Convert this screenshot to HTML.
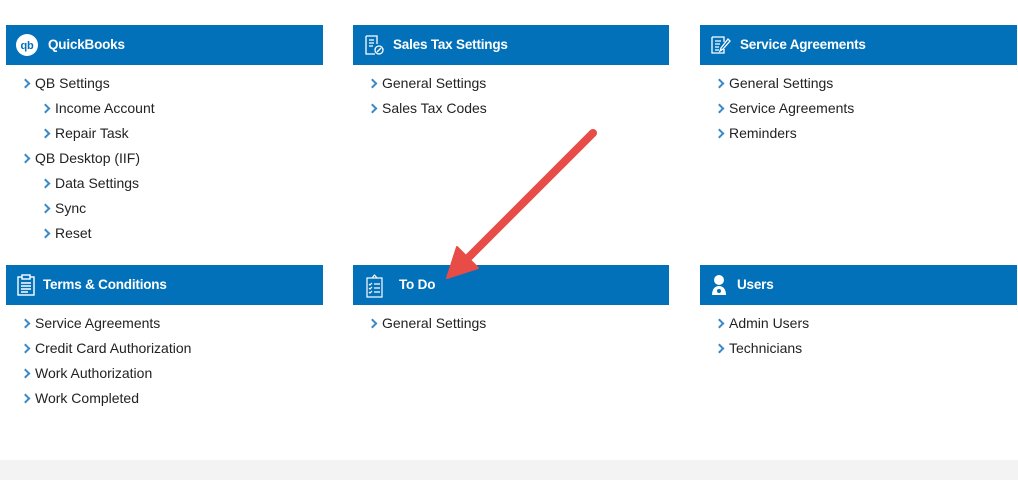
<!DOCTYPE html>
<html><head><style>
body{margin:0;width:1018px;height:480px;background:#fff;font-family:"Liberation Sans",sans-serif;position:relative;overflow:hidden}
.h{position:absolute;height:40px;background:#0271b9;color:#fff;font-weight:bold;font-size:13.5px;letter-spacing:-0.2px;line-height:40px;box-sizing:border-box}
.h svg{position:absolute;top:9px}
.h span{position:absolute;top:0}
.i{position:absolute;font-size:14px;color:#222;line-height:18px}
.i:before{content:"";position:absolute;left:-13px;top:6px;width:5px;height:5px;border-right:2px solid #3a8ac8;border-top:2px solid #3a8ac8;transform:rotate(45deg)}
.foot{position:absolute;left:0;top:460px;width:1018px;height:20px;background:#f3f3f3}
</style></head><body>
<div class="h" style="left:6px;top:25px;width:317px">
<svg style="left:10px" width="22" height="22" viewBox="0 0 22 22"><circle cx="11" cy="11" r="11" fill="#fff"/><text x="11" y="15" text-anchor="middle" font-size="11" font-weight="bold" fill="#0271b9" font-family="Liberation Sans">qb</text></svg>
<span style="left:42px">QuickBooks</span></div>
<div class="h" style="left:353px;top:25px;width:316px">
<svg style="left:10px" width="22" height="22" viewBox="0 0 22 22" fill="none" stroke="#fff" stroke-width="1.3"><path d="M3 2h11v8M3 2v18h9"/><path d="M6 6h5M6 9h5M6 12h4"/><circle cx="16" cy="16" r="4"/><path d="M14 18l4-4"/></svg>
<span style="left:40px">Sales Tax Settings</span></div>
<div class="h" style="left:700px;top:25px;width:317px">
<svg style="left:9px" width="22" height="22" viewBox="0 0 22 22" fill="none" stroke="#fff" stroke-width="1.3"><path d="M3 3h12v5M3 3v16h12v-4"/><path d="M6 7h6M6 10h5M6 13h4M6 16h4"/><path d="M19 5l-7 9-1 3 3-2 7-8z"/></svg>
<span style="left:40px">Service Agreements</span></div>
<div class="h" style="left:6px;top:265px;width:317px">
<svg style="left:10px" width="20" height="22" viewBox="0 0 20 22" fill="none" stroke="#fff" stroke-width="1.4"><rect x="2" y="3" width="16" height="18"/><rect x="6" y="1" width="8" height="4" fill="#0271b9"/><path d="M5 9h10M5 12h10M5 15h10M5 18h7"/></svg>
<span style="left:37px">Terms &amp; Conditions</span></div>
<div class="h" style="left:353px;top:265px;width:316px">
<svg style="left:12px" width="20" height="24" viewBox="0 0 20 24" fill="none" stroke="#fff" stroke-width="1.2"><rect x="2" y="4" width="15" height="19"/><path d="M7 4l2.5-3L12 4"/><path d="M4 10l1 1 2-2M4 14l1 1 2-2M4 18l1 1 2-2M9 10h6M9 14h6M9 18h6"/></svg>
<span style="left:46px">To Do</span></div>
<div class="h" style="left:700px;top:265px;width:317px">
<svg style="left:9px" width="20" height="22" viewBox="0 0 20 22" fill="#fff"><circle cx="10" cy="6" r="5"/><path d="M3 21c0-6 3-9 7-9s7 3 7 9z"/><circle cx="10" cy="17" r="2" fill="#0271b9"/></svg>
<span style="left:37px">Users</span></div>

<div class="i" style="left:35px;top:74px">QB Settings</div>
<div class="i" style="left:55px;top:99px">Income Account</div>
<div class="i" style="left:55px;top:124px">Repair Task</div>
<div class="i" style="left:35px;top:149px">QB Desktop (IIF)</div>
<div class="i" style="left:55px;top:174px">Data Settings</div>
<div class="i" style="left:55px;top:199px">Sync</div>
<div class="i" style="left:55px;top:224px">Reset</div>

<div class="i" style="left:382px;top:74px">General Settings</div>
<div class="i" style="left:382px;top:99px">Sales Tax Codes</div>

<div class="i" style="left:729px;top:74px">General Settings</div>
<div class="i" style="left:729px;top:99px">Service Agreements</div>
<div class="i" style="left:729px;top:124px">Reminders</div>

<div class="i" style="left:35px;top:314px">Service Agreements</div>
<div class="i" style="left:35px;top:339px">Credit Card Authorization</div>
<div class="i" style="left:35px;top:364px">Work Authorization</div>
<div class="i" style="left:35px;top:389px">Work Completed</div>

<div class="i" style="left:382px;top:314px">General Settings</div>

<div class="i" style="left:729px;top:314px">Admin Users</div>
<div class="i" style="left:729px;top:339px">Technicians</div>

<svg style="position:absolute;left:0;top:0" width="1018" height="480">
<line x1="593" y1="133" x2="468" y2="258" stroke="#e84c47" stroke-width="8" stroke-linecap="round"/>
<path d="M447 278 L457 247 L478 268 Z" fill="#e84c47" stroke="#e84c47" stroke-width="2" stroke-linejoin="round"/>
</svg>
<div class="foot"></div>
</body></html>
